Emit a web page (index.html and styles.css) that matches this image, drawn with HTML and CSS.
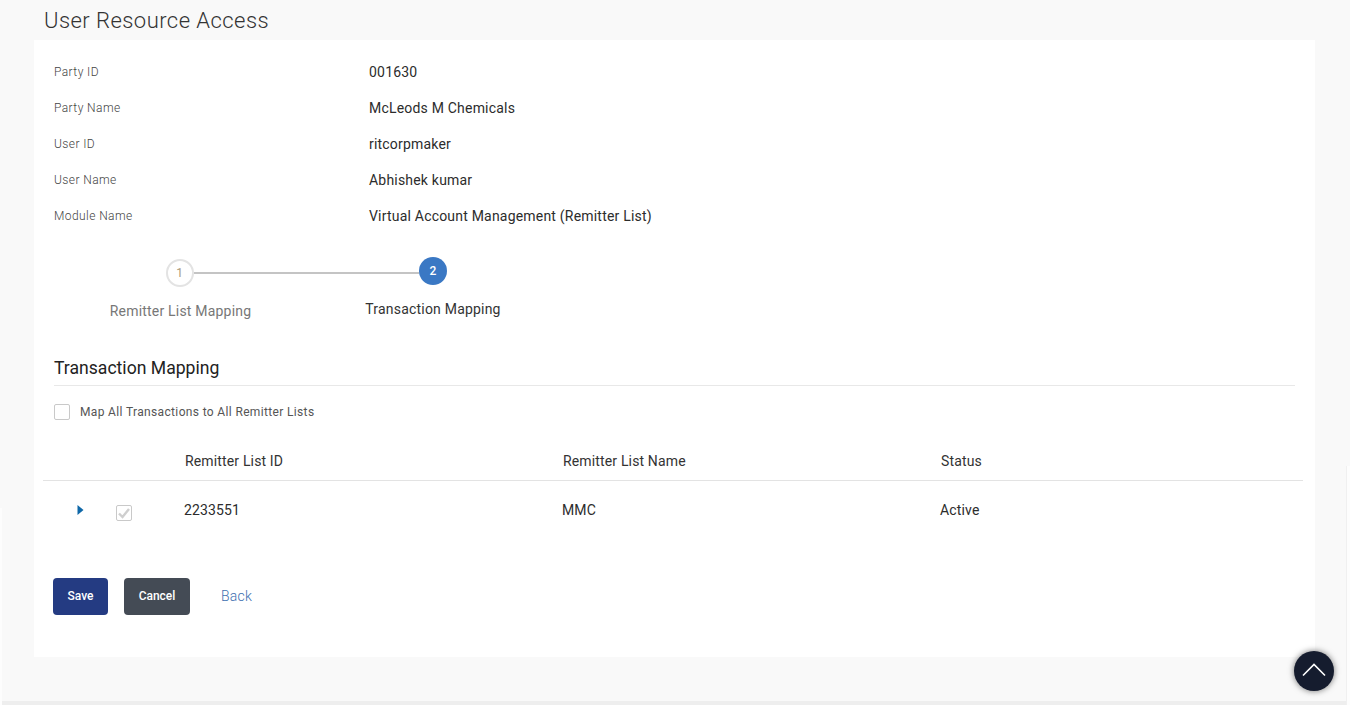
FILE: index.html
```html
<!DOCTYPE html>
<html lang="en">
<head>
<meta charset="utf-8">
<title>User Resource Access</title>
<link rel="stylesheet" href="styles.css">
</head>
<body>
<main class="page">
  <h1 class="title">User Resource Access</h1>
  <section class="card">
    <dl class="details">
      <div class="row"><dt>Party ID</dt><dd>001630</dd></div>
      <div class="row"><dt>Party Name</dt><dd>McLeods M Chemicals</dd></div>
      <div class="row"><dt>User ID</dt><dd>ritcorpmaker</dd></div>
      <div class="row"><dt>User Name</dt><dd>Abhishek kumar</dd></div>
      <div class="row"><dt>Module Name</dt><dd>Virtual Account Management (Remitter List)</dd></div>
    </dl>

    <div class="stepper">
      <div class="step step-done">
        <span class="dot">1</span>
        <span class="step-label">Remitter List Mapping</span>
      </div>
      <div class="step step-current">
        <span class="dot">2</span>
        <span class="step-label">Transaction Mapping</span>
      </div>
    </div>

    <h2 class="section">Transaction Mapping</h2>
    <label class="map-all"><span class="box"></span>Map All Transactions to All Remitter Lists</label>

    <div class="table">
      <div class="thead">
        <span class="c-id">Remitter List ID</span>
        <span class="c-name">Remitter List Name</span>
        <span class="c-status">Status</span>
      </div>
      <div class="tbody">
        <svg class="caret" width="7" height="10" viewBox="0 0 7 10"><path d="M0.5 0 L6.5 5 L0.5 10 Z" fill="#0f68a8"/></svg>
        <span class="box box-checked">
          <svg width="14" height="12" viewBox="0 0 14 12"><path d="M2 6.5 L5.5 10 L12 2" fill="none" stroke="#cfcfcf" stroke-width="2.4"/></svg>
        </span>
        <span class="c-id">2233551</span>
        <span class="c-name">MMC</span>
        <span class="c-status">Active</span>
      </div>
    </div>

    <div class="actions">
      <button class="btn btn-save">Save</button>
      <button class="btn btn-cancel">Cancel</button>
      <a class="back" href="#">Back</a>
    </div>
  </section>
  <button class="to-top" aria-label="Back to top">
    <svg width="26" height="16" viewBox="0 0 26 16"><path d="M2 12.5 L13 1.5 L24 12.5" fill="none" stroke="#fff" stroke-width="1.6"/></svg>
  </button>
</main>
</body>
</html>
```
FILE: styles.css
```css
* { box-sizing: border-box; }
html, body { margin: 0; height: 100%; overflow: hidden; }
body {
  background: #f9f9f9;
  font-family: Roboto, "Liberation Sans", sans-serif;
  color: #2c2c2c;
}
.page { height: 705px; border-bottom: 4px solid #eeeeee; position: relative; }
.page::before {
  content: ""; position: absolute; left: 0; top: 508px; bottom: -4px;
  width: 2px; background: #fdfdfd;
}
.page::after {
  content: ""; position: absolute; right: 0; top: 466px; bottom: -4px;
  width: 3px; background: #fdfdfd; border-left: 1px solid #f0f0f0;
}
.title {
  margin: 0;
  padding: 8px 0 0 44px;
  height: 40px;
  font-size: 22px;
  line-height: 26px;
  font-weight: 300;
  letter-spacing: 0.45px;
  color: #333;
}
.card {
  margin: 0 35px 0 34px;
  height: 617px;
  background: #fff;
  padding: 14px 20px 0;
}
.details { margin: 0; }
.row { display: flex; height: 36px; align-items: center; }
.row dt { width: 315px; font-size: 12px; font-weight: 300; letter-spacing: 0.42px; color: #444; }
.row dd { margin: 0; font-size: 14px; letter-spacing: 0.2px; color: #2c2c2c; }
.stepper { display: flex; margin-top: 23px; height: 98px; padding-left: 36px; }
.step { display: flex; flex-direction: column; align-items: center; position: relative; }
.step-done { width: 181px; margin-right: 84px; }
.step-current { width: 156px; }
.dot {
  width: 28px; height: 28px; border-radius: 50%;
  display: flex; align-items: center; justify-content: center;
  font-size: 12px; position: relative; z-index: 1;
}
.step-done .dot { border: 2px solid #e3e3e3; background: #fff; color: #a89a7a; margin: 2px 2px 0 0; }
.step-done::after {
  content: ""; position: absolute; left: 104px; top: 15px;
  width: 225px; height: 2px; background: #c4c4c4;
}
.step-current .dot { background: #3a78c4; color: #fff; font-weight: 500; }
.step-label { font-size: 14px; letter-spacing: 0.2px; line-height: 18px; }
.step-done .step-label { color: #777; margin-top: 15px; }
.step-current .step-label { color: #333; margin-top: 15px; }
.section {
  margin: 0;
  padding-top: 1px;
  height: 31px;
  font-size: 17.6px;
  line-height: 24px;
  font-weight: 400;
  color: #222;
  border-bottom: 1px solid #e8e8e8;
}
.map-all { display: flex; align-items: center; margin-top: 18px; font-size: 12px; letter-spacing: 0.35px; color: #555; height: 16px; }
.box {
  width: 16px; height: 16px; flex: none;
  border: 1px solid #c9c9c9; border-radius: 2px; background: #fff;
  margin-right: 10px;
  display: inline-flex; align-items: center; justify-content: center;
}
.table { margin: 19px -8px 0 -11px; }
.thead {
  display: flex; height: 42px; padding: 3px 0 0 142px;
  border-bottom: 1px solid #e3e3e3;
  font-size: 14px; letter-spacing: 0.15px; color: #333;
  align-items: center;
}
.c-id { width: 378px; }
.c-name { width: 378px; }
.tbody {
  display: flex; align-items: center; height: 57px; padding-left: 34px;
  font-size: 14px; letter-spacing: 0.15px; color: #2c2c2c;
}
.caret { flex: none; margin-right: 32px; }
.box-checked { margin-right: 52px; position: relative; top: 3px; }
.actions { display: flex; align-items: center; margin-top: 40px; margin-left: -1px; }
.btn {
  height: 37px; border: 0; border-radius: 4px; color: #fff;
  font-family: inherit; font-size: 12px; font-weight: 500; padding: 0 0 2px;
}
.btn-save { width: 55px; background: #243b82; margin-right: 16px; }
.btn-cancel { width: 66px; background: #444b55; margin-right: 31px; }
.back { color: #3d6fb0; font-size: 14px; font-weight: 300; text-decoration: none; letter-spacing: 0.2px; padding-bottom: 2px; }
.to-top {
  position: absolute; left: 1294px; top: 651px;
  width: 40px; height: 40px; border-radius: 50%; border: 0; padding: 0;
  background: #151c2e; box-shadow: 0 0 6px rgba(0,0,0,.55);
  display: flex; align-items: center; justify-content: center;
}
```
